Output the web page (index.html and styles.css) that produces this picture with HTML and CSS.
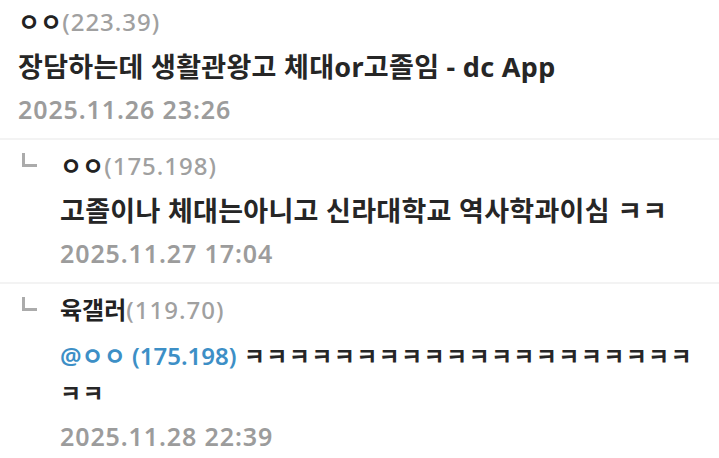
FILE: index.html
```html
<!DOCTYPE html>
<html lang="ko">
<head>
<meta charset="UTF-8">
<meta name="viewport" content="width=device-width, initial-scale=1.0">
<title>댓글</title>
<link rel="stylesheet" href="styles.css">
</head>
<body>

<div class="comments">
  <div class="item">
    <div class="body">
      <div class="name">ㅇㅇ<span class="ip">(223.39)</span></div>
      <div class="text">장담하는데 생활관왕고 체대or고졸임 - dc App</div>
      <div class="date">2025.11.26 23:26</div>
    </div>
  </div>

  <div class="item reply">
    <span class="mark"></span>
    <div class="body">
      <div class="name">ㅇㅇ<span class="ip">(175.198)</span></div>
      <div class="text">고졸이나 체대는아니고 신라대학교 역사학과이심 ㅋㅋ</div>
      <div class="date">2025.11.27 17:04</div>
    </div>
  </div>

  <div class="item reply">
    <span class="mark"></span>
    <div class="body">
      <div class="name">육갤러<span class="ip">(119.70)</span></div>
      <div class="text"><span class="mention">@ㅇㅇ (175.198)</span> <span class="kk">ㅋㅋㅋㅋㅋㅋㅋㅋㅋㅋㅋㅋㅋㅋㅋㅋㅋㅋㅋㅋㅋㅋ</span></div>
      <div class="date">2025.11.28 22:39</div>
    </div>
  </div>
</div>

</body>
</html>
```

FILE: styles.css
```css
body {
  margin: 0;
  background: #fff;
  font-family: "Noto Sans", "Noto Sans CJK KR", sans-serif;
  color: #262626;
}
.comments {
  width: 719px;
}
.item {
  display: flex;
  padding: 6px 18px 13px 18px;
  border-bottom: 2px solid #f3f3f3;
}
.item:last-child {
  border-bottom: none;
}
.reply {
  padding-top: 10px;
}
.mark {
  flex: none;
  width: 12px;
  height: 11px;
  margin: 3px 23px 0 4px;
  border-left: 3px solid #ababab;
  border-bottom: 3px solid #ababab;
}
.body {
  flex: 1;
  min-width: 0;
}
.name {
  font-size: 24px;
  line-height: 32px;
  font-weight: 700;
  color: #222;
}
.ip {
  font-weight: 500;
  letter-spacing: 1px;
  color: #a0a0a0;
}
.text {
  margin-top: 11px;
  font-size: 27px;
  line-height: 35px;
  font-weight: 700;
  letter-spacing: 0.3px;
  color: #262626;
}
.mention {
  font-size: 24px;
  font-weight: 600;
  letter-spacing: 0;
  color: #3d8fc6;
}
.kk {
  font-size: 23px;
  letter-spacing: 1.3px;
}
.date {
  margin-top: 9px;
  font-size: 25px;
  line-height: 32px;
  font-weight: 600;
  letter-spacing: 0.9px;
  color: #9c9c9c;
}
```
